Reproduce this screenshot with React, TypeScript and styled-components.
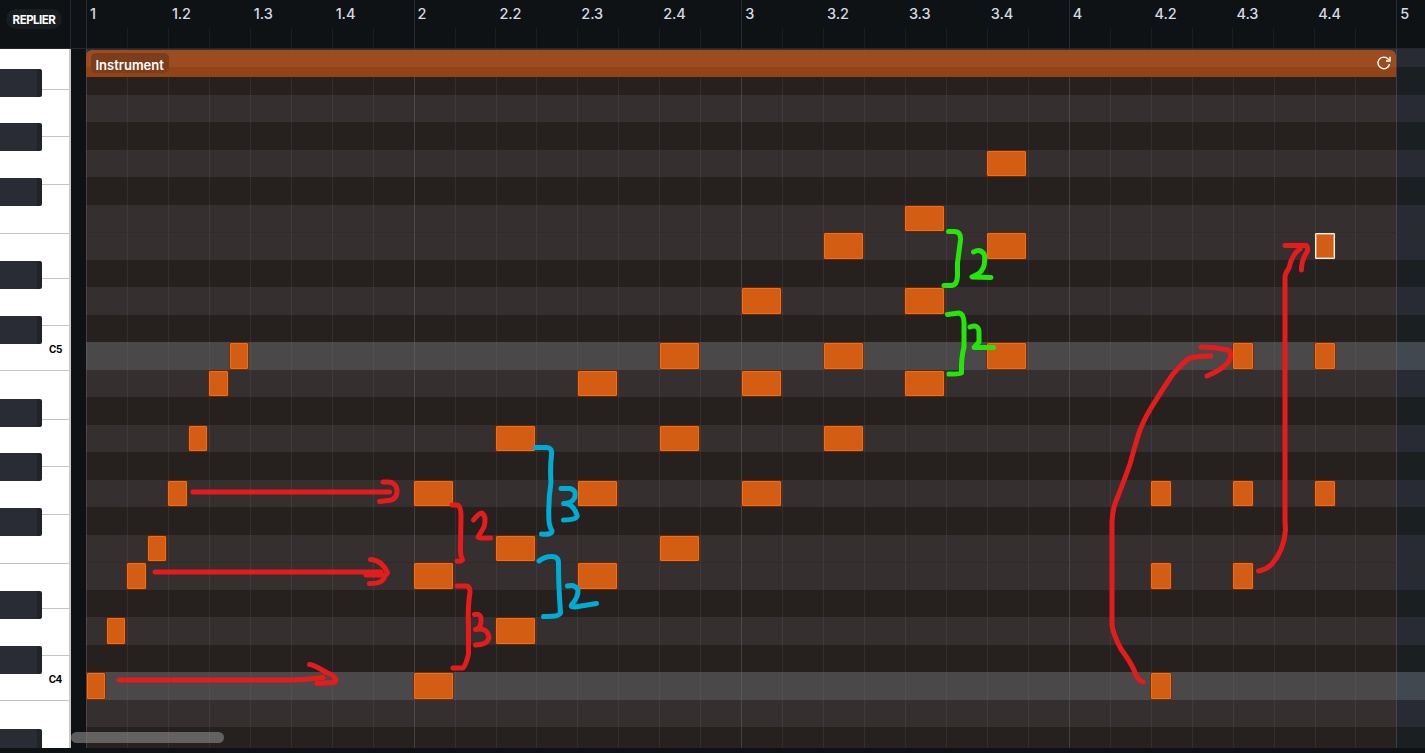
import React from "react";
import styled, { createGlobalStyle } from "styled-components";

const ROW = 27.5;
const BEAT = 81.9;
const ORIGIN = 15;

const Global = createGlobalStyle`
  * { box-sizing: border-box; }
  html, body { margin: 0; background: #0e1214; overflow: hidden; }
  body { font-family: Inter, "Liberation Sans", sans-serif; }
`;

const Editor = styled.div`
  position: relative;
  display: grid;
  grid-template-columns: 71px 1fr;
  grid-template-rows: 49px 699px 5px;
  width: 1425px;
  height: 753px;
  overflow: hidden;
  background: #0e1214;
`;

const Corner = styled.div`
  display: flex;
  align-items: flex-start;
  padding: 9px 0 0 6px;
  border-right: 1px solid #26282e;
  border-bottom: 1px solid #26262e;
`;

const Collapse = styled.button`
  width: 56px;
  height: 20px;
  padding: 1px 0 0;
  border: 0;
  border-radius: 10px;
  background: #181d20;
  color: #fff;
  font: 700 11.5px/20px Inter, sans-serif;
  letter-spacing: -0.5px;
  text-align: center;
`;

const Ruler = styled.div`
  display: flex;
  padding-left: 15px;
  border-bottom: 1px solid #26262e;
  overflow: hidden;
`;

const RulerBeat = styled.div<{ $bar: boolean }>`
  flex: 0 0 ${BEAT}px;
  height: 48px;
  padding: 5px 0 0 4px;
  color: #d5dae3;
  font: 500 14.5px/18px Inter, sans-serif;
  letter-spacing: -0.1px;
  background-image: linear-gradient(${(p) => (p.$bar ? "#2a2c33" : "#1a1e21")}, ${(p) => (p.$bar ? "#2a2c33" : "#1a1e21")}),
    linear-gradient(#1a1e21, #1a1e21);
  background-size: 1px ${(p) => (p.$bar ? 48 : 20)}px, 1px 20px;
  background-position: 0 100%, 41px 100%;
  background-repeat: no-repeat;
`;

const Keyboard = styled.div`
  position: relative;
  display: flex;
  flex-direction: column;
  background: #fff;
  border-right: 2px solid #c9c9c9;
  overflow: hidden;
`;

const WhiteKey = styled.div<{ $h: number }>`
  flex: 0 0 ${(p) => p.$h}px;
  display: flex;
  justify-content: flex-end;
  align-items: flex-end;
  padding: 0 7px 14px 0;
  border-bottom: 1px solid #c4c4c4;
  color: #000;
  font: 700 10px/14px Inter, sans-serif;
  letter-spacing: -0.4px;
`;

const BlackKey = styled.div<{ $y: number }>`
  position: absolute;
  left: 0;
  top: ${(p) => p.$y}px;
  width: 42px;
  height: 28px;
  border-radius: 0 2px 2px 0;
  background: linear-gradient(90deg, #292c34 37px, #202427 37px);
`;

const Roll = styled.div`
  position: relative;
  padding-left: 15px;
  overflow: hidden;
`;

const Lanes = styled.div`
  display: flex;
  flex-direction: column;
  margin-top: -9.5px;
`;

const laneColor = { white: "#282b34", black: "#1a1f21", root: "#414850" };
const clipColor = { white: "#352f2f", black: "#26211e", root: "#4a4848" };

const Lane = styled.div<{ $kind: "white" | "black" | "root"; $line: boolean }>`
  flex: 0 0 ${ROW}px;
  background: linear-gradient(
    90deg,
    ${(p) => clipColor[p.$kind]} 1310px,
    ${(p) => laneColor[p.$kind]} 1310px
  );
  box-shadow: ${(p) => (p.$line ? "inset 0 1px #302a2a" : "none")};
`;

const Overlay = styled.svg`
  position: absolute;
  left: 0;
  top: 0;
  pointer-events: none;
`;

const Clip = styled.div`
  position: absolute;
  left: 15px;
  top: 1px;
  width: 1310px;
  height: 27px;
  display: flex;
  justify-content: space-between;
  align-items: flex-start;
  padding: 3px 5px 0;
  border-radius: 6px 6px 0 0;
  background: linear-gradient(#9b4c20 17px, #934415 17px);
`;

const ClipName = styled.span`
  height: 20px;
  width: 78px;
  padding-left: 4.5px;
  border-radius: 5px;
  background: #7c3d1b;
  color: #fff;
  font: 600 13px/24px Inter, sans-serif;
  letter-spacing: 0;
`;

const LoopIcon = styled.svg`
  margin: 2px -1px 0 0;
`;

const Note = styled.div<{ $x: number; $y: number; $w: number; $selected?: boolean }>`
  position: absolute;
  left: ${(p) => p.$x}px;
  top: ${(p) => p.$y}px;
  width: ${(p) => p.$w}px;
  height: 26px;
  border: 1px solid ${(p) => (p.$selected ? "#fff" : "#ff680d")};
  border-radius: 1px;
  background: #d45d14;
  box-shadow: 0 0 0 1px rgba(110, 45, 10, 0.55),
    inset 0 0 0 1px ${(p) => (p.$selected ? "rgba(255, 255, 255, 0.35)" : "transparent")};
`;

const ShortNote = styled(Note)`
  height: 25px;
`;

const Scrollbar = styled.div`
  position: absolute;
  left: 0;
  bottom: 5px;
  width: 153px;
  height: 11px;
  border-radius: 6px;
  background: rgba(139, 139, 139, 0.62);
`;

const beats = Array.from({ length: 17 }, (_, i) => {
  const bar = Math.floor(i / 4) + 1;
  return i % 4 ? `${bar}.${(i % 4) + 1}` : `${bar}`;
});

const pitchClasses = ["B", "A#", "A", "G#", "G", "F#", "F", "E", "D#", "D", "C#", "C"];
const lanes = Array.from({ length: 27 }, (_, i) => pitchClasses[i % 12]);

const whiteBottoms = [90, 137, 185, 234, 279, 326, 371, 420, 467, 515, 564, 609, 656, 701, 750];
const blackTops = [69, 123, 178, 261, 316, 399, 453, 508, 591, 646, 729];

// [x, y, width] in editor coordinates
const notes: [number, number, number][] = [
  [87, 673, 18], [107, 618, 18], [127, 563, 19], [148, 536, 18], [168, 481, 19],
  [189, 426, 18], [209, 371, 19], [230, 343, 18],
  [414, 481, 39], [414, 563, 39], [414, 673, 39],
  [496, 426, 39], [496, 536, 39], [496, 618, 39],
  [578, 371, 39], [578, 481, 39], [578, 563, 39],
  [660, 343, 39], [660, 426, 39], [660, 536, 39],
  [742, 288, 39], [742, 371, 39], [742, 481, 39],
  [824, 233, 39], [824, 343, 39], [824, 426, 39],
  [905, 206, 39], [905, 288, 39], [905, 371, 39],
  [987, 151, 39], [987, 233, 39], [987, 343, 39],
  [1151, 481, 20], [1151, 563, 20], [1151, 673, 20],
  [1233, 343, 20], [1233, 481, 20], [1233, 563, 20],
  [1315, 233, 20], [1315, 343, 20], [1315, 481, 20],
];
const shortRows = [151, 206, 371, 426, 481, 536];

const strokes: { color: string; paths: string[] }[] = [
  {
    color: "#e61c1c",
    paths: [
      "M193 492H389.5",
      "M383 482H388C394 482 397 486 397 491C397 496 395 500 388 500.500L379.500 501.500",
      "M155 572H381",
      "M370.500 559.500C380 560 385 567 387.500 573C386 576 384 576 381 575H366M385 576C383 582 379 583.500 369.500 583.500",
      "M119 680H292Q300 680 309 679L323 677.500",
      "M309.500 664.500C316 665 322 671 330 674C336 677 337 680 335 682C332 683.500 326 682 317 683.500",
      "M452 505H457Q461 506 461 516L460.500 548Q460 555 462.500 560Q461 562 457 561",
      "M473.500 520Q479 513 482 513Q487 517 484 527L478 537Q478 538.500 490.500 538",
      "M457 586H466Q470 586 470 592Q467.500 607 468.500 627V654Q466 665 463 668H453",
      "M474.500 614.500Q480 613 481 618Q482 628 475.500 629.500Q488 627 489 638Q487 645 475.500 645",
      "M1143 682Q1137 680 1134 670Q1131 663 1121 649Q1113 634 1112 625V521Q1113 508 1116 501Q1121 489 1130 464Q1134 449 1138 436C1141 426 1145 418 1151 408Q1164 387 1173 374Q1184 362 1188 359Q1194 356 1211 356",
      "M1201 347Q1215 347 1228 350Q1232 352 1230 359Q1226 368 1207 376",
      "M1258.500 571Q1265 570 1271 565Q1284 551 1285.500 530L1285 520V277Q1285 274 1289 268Q1292 254 1300 249",
      "M1285 245.500H1306Q1308 246 1307.500 251Q1301 261 1301.500 270",
    ],
  },
  {
    color: "#00acd4",
    paths: [
      "M535.500 447.500H547Q552.500 448 551.500 455Q550 468 551 482Q548 502 549 521Q549 525 552 531Q552 535 541.500 534",
      "M561 488.500H570Q577 490 574.500 498Q572 503 563.500 503.500Q573 503 577 515Q578 520 563.500 520",
      "M539 561Q545 556.500 551 556.500Q559 556 558.500 564Q558.500 585 560.500 613Q559 617 543.500 616.500",
      "M567.500 586Q575 584 578 590Q578.500 597 571.500 605Q570 607 575 607L596.500 603.500",
    ],
  },
  {
    color: "#25e60a",
    paths: [
      "M948.500 231.500H955Q961 232 960.500 240L957.500 263V276Q957 285 952 285.500H944",
      "M973.500 252Q981 248 984.500 255Q986 269 978 274L972 277L991 277.500",
      "M947.500 314.500L959 313Q964 314 964 323V347Q961 358 961.500 373Q961 374.500 949 374",
      "M970 327Q978 324 979 331V342L974 347.500H993.500",
    ],
  },
];

export default function App() {
  return (
    <>
      <Global />
      <Editor>
        <Corner>
          <Collapse>REPLIER</Collapse>
        </Corner>
        <Ruler>
          {beats.map((b, i) => (
            <RulerBeat key={b} $bar={i % 4 === 0}>
              {b}
            </RulerBeat>
          ))}
        </Ruler>
        <Keyboard>
          {whiteBottoms.map((b, i) => (
            <WhiteKey key={b} $h={b - (i ? whiteBottoms[i - 1] : 49)}>
              {b === 371 ? "C5" : b === 701 ? "C4" : ""}
            </WhiteKey>
          ))}
          {blackTops.map((y) => (
            <BlackKey key={y} $y={y - 49} />
          ))}
        </Keyboard>
        <Roll>
          <Lanes>
            {lanes.map((p, i) => (
              <Lane
                key={i}
                $kind={p === "C" ? "root" : p.endsWith("#") ? "black" : "white"}
                $line={p === "E"}
              />
            ))}
          </Lanes>
          <Overlay width={1354} height={699}>
            {Array.from({ length: 33 }, (_, i) => (
              <rect
                key={i}
                x={Math.round(ORIGIN + (i * BEAT) / 2)}
                y={0}
                width={1}
                height={699}
                fill={i % 8 === 0 ? "rgba(115,125,135,0.35)" : "rgba(130,140,145,0.13)"}
              />
            ))}
          </Overlay>
          <Clip>
            <ClipName>Instrument</ClipName>
            <LoopIcon width="16" height="16" viewBox="0 0 16 16" fill="none" stroke="#fff" strokeWidth="1.4">
              <path d="M13.500 9A5.800 5.800 0 1 1 12.200 4.100L14 5.800" />
              <path d="M14 1.800V6H10" />
            </LoopIcon>
          </Clip>
          {notes.map(([x, y, w]) => {
            const Box = shortRows.includes(y) ? ShortNote : Note;
            return <Box key={`${x}-${y}`} $x={x - 71} $y={y - 49} $w={w} $selected={x === 1315 && y === 233} />;
          })}
          <Scrollbar />
        </Roll>
        <Overlay width={1425} height={753} fill="none" strokeWidth={5} strokeLinecap="round" strokeLinejoin="round">
          {strokes.map((s) => (
            <g key={s.color} stroke={s.color}>
              {s.paths.map((d) => (
                <path key={d} d={d} />
              ))}
            </g>
          ))}
        </Overlay>
      </Editor>
    </>
  );
}
